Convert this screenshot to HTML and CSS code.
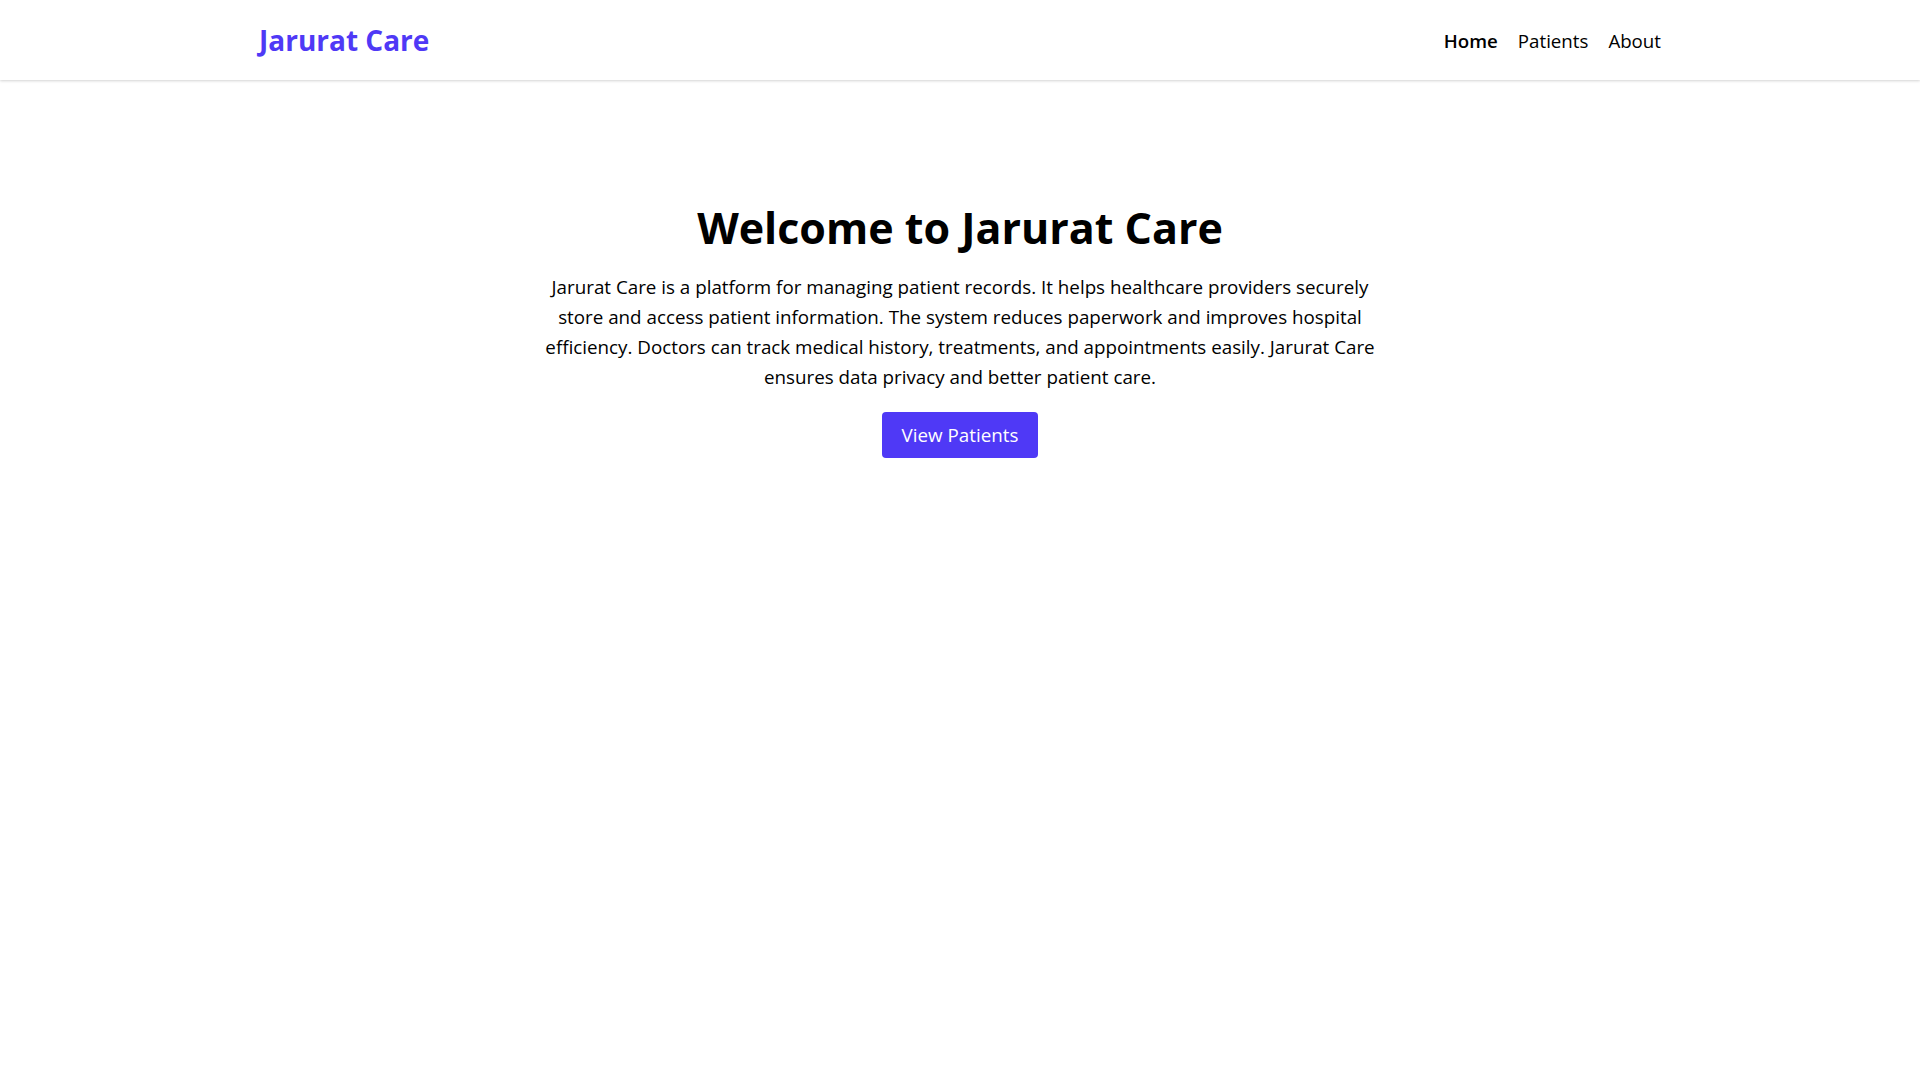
FILE: index.html
```html
<!DOCTYPE html>
<html lang="en">
<head>
<meta charset="utf-8">
<title>Jarurat Care</title>
<link rel="stylesheet" href="styles.css">
</head>
<body>
<header class="navbar">
  <div class="nav-inner">
    <a class="logo" href="#">Jarurat Care</a>
    <nav class="nav-links">
      <a class="nav-link active" href="#">Home</a>
      <a class="nav-link" href="#">Patients</a>
      <a class="nav-link" href="#">About</a>
    </nav>
  </div>
</header>
<main class="hero">
  <h1 class="hero-title">Welcome to Jarurat Care</h1>
  <p class="hero-text">Jarurat Care is a platform for managing patient records. It helps healthcare providers securely<br>store and access patient information. The system reduces paperwork and improves hospital<br>efficiency. Doctors can track medical history, treatments, and appointments easily. Jarurat Care<br>ensures data privacy and better patient care.</p>
  <a class="btn" href="#">View Patients</a>
</main>
</body>
</html>
```
FILE: styles.css
```css
* { box-sizing: border-box; }
html, body { margin: 0; padding: 0; }
body {
  font-family: "Open Sans", "Noto Sans", sans-serif;
  background: #ffffff;
  color: #000;
}
a { text-decoration: none; }
.navbar {
  height: 80px;
  background: #fff;
  box-shadow: 0 1px 3px rgba(0,0,0,0.12), 0 1px 2px rgba(0,0,0,0.06);
}
.nav-inner {
  max-width: 1402px;
  margin: 0 auto;
  height: 100%;
  display: flex;
  align-items: center;
  justify-content: space-between;
}
.logo {
  color: #4f39f6;
  font-size: 28px;
  font-weight: 700;
}
.nav-links {
  display: flex;
  gap: 20px;
}
.nav-link {
  color: #000;
  font-size: 18.7px;
}
.nav-link.active { font-weight: 600; }
.hero {
  display: flex;
  flex-direction: column;
  align-items: center;
  text-align: center;
  padding-top: 122px;
}
.hero-title {
  margin: 0;
  font-size: 43px;
  font-weight: 700;
  line-height: 1.2;
}
.hero-text {
  margin: 18px 0 0;
  font-size: 18.8px;
  line-height: 30px;
}
.btn {
  margin-top: 20px;
  background: #4f39f6;
  color: #fff;
  font-size: 18.8px;
  padding: 8px 20px;
  border-radius: 4px;
  line-height: 30px;
}
```
